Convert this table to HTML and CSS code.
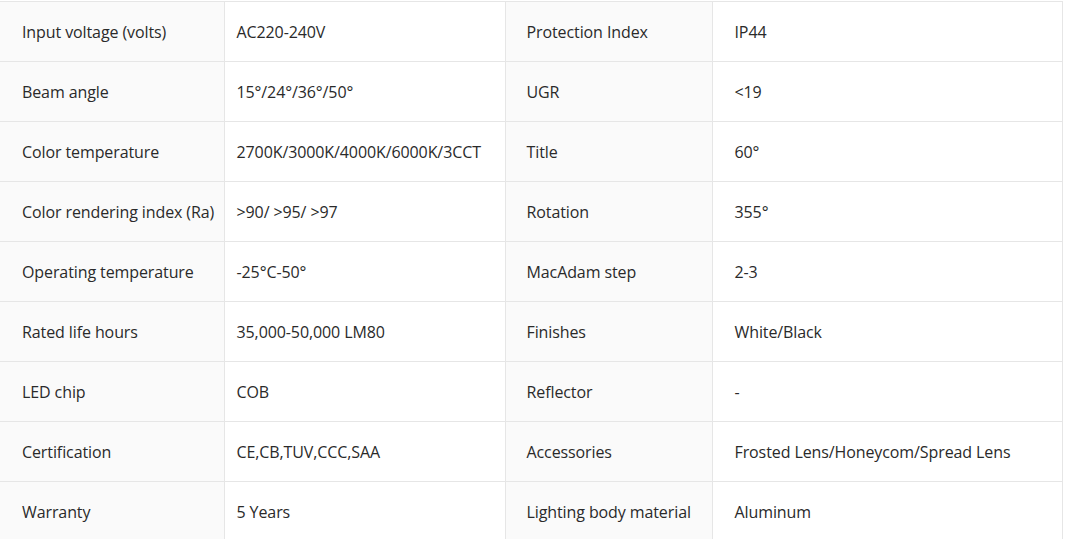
FILE: index.html
```html
<!DOCTYPE html>
<html>
<head>
<meta charset="utf-8">
<link rel="stylesheet" href="styles.css">
</head>
<body>
<table class="spec">
  <colgroup>
    <col class="c1"><col class="c2"><col class="c3"><col class="c4">
  </colgroup>
  <tbody>
    <tr><td class="k">Input voltage (volts)</td><td class="v">AC220-240V</td><td class="k k2">Protection Index</td><td class="v v2">IP44</td></tr>
    <tr><td class="k">Beam angle</td><td class="v">15°/24°/36°/50°</td><td class="k k2">UGR</td><td class="v v2">&lt;19</td></tr>
    <tr><td class="k">Color temperature</td><td class="v">2700K/3000K/4000K/6000K/3CCT</td><td class="k k2">Title</td><td class="v v2">60°</td></tr>
    <tr><td class="k">Color rendering index (Ra)</td><td class="v">&gt;90/ &gt;95/ &gt;97</td><td class="k k2">Rotation</td><td class="v v2">355°</td></tr>
    <tr><td class="k">Operating temperature</td><td class="v">-25°C-50°</td><td class="k k2">MacAdam step</td><td class="v v2">2-3</td></tr>
    <tr><td class="k">Rated life hours</td><td class="v">35,000-50,000 LM80</td><td class="k k2">Finishes</td><td class="v v2">White/Black</td></tr>
    <tr><td class="k">LED chip</td><td class="v">COB</td><td class="k k2">Reflector</td><td class="v v2">-</td></tr>
    <tr><td class="k">Certification</td><td class="v">CE,CB,TUV,CCC,SAA</td><td class="k k2">Accessories</td><td class="v v2">Frosted Lens/Honeycom/Spread Lens</td></tr>
    <tr><td class="k">Warranty</td><td class="v">5 Years</td><td class="k k2">Lighting body material</td><td class="v v2">Aluminum</td></tr>
  </tbody>
</table>
</body>
</html>
```
FILE: styles.css
```css
html, body {
  margin: 0;
  padding: 0;
  background: #ffffff;
}
body {
  padding-top: 1px;
  font-family: "Open Sans", "Noto Sans", sans-serif;
  font-size: 16px;
  letter-spacing: -0.1px;
  color: #2a2a2a;
}
.spec {
  border-collapse: collapse;
  table-layout: fixed;
  width: 1062px;
}
.c1 { width: 224px; }
.c2 { width: 281px; }
.c3 { width: 207px; }
.c4 { width: 350px; }
.spec td {
  height: 59px;
  padding: 0;
  border: 1px solid #e6e6e6;
  vertical-align: middle;
  white-space: nowrap;
  overflow: hidden;
}
.spec td:first-child {
  border-left: none;
}
.k {
  background: #fafafa;
  padding-left: 22px !important;
}
.v {
  background: #ffffff;
  padding-left: 12px !important;
}
.k2 { padding-left: 21px !important; }
.v2 { padding-left: 22px !important; }
```
